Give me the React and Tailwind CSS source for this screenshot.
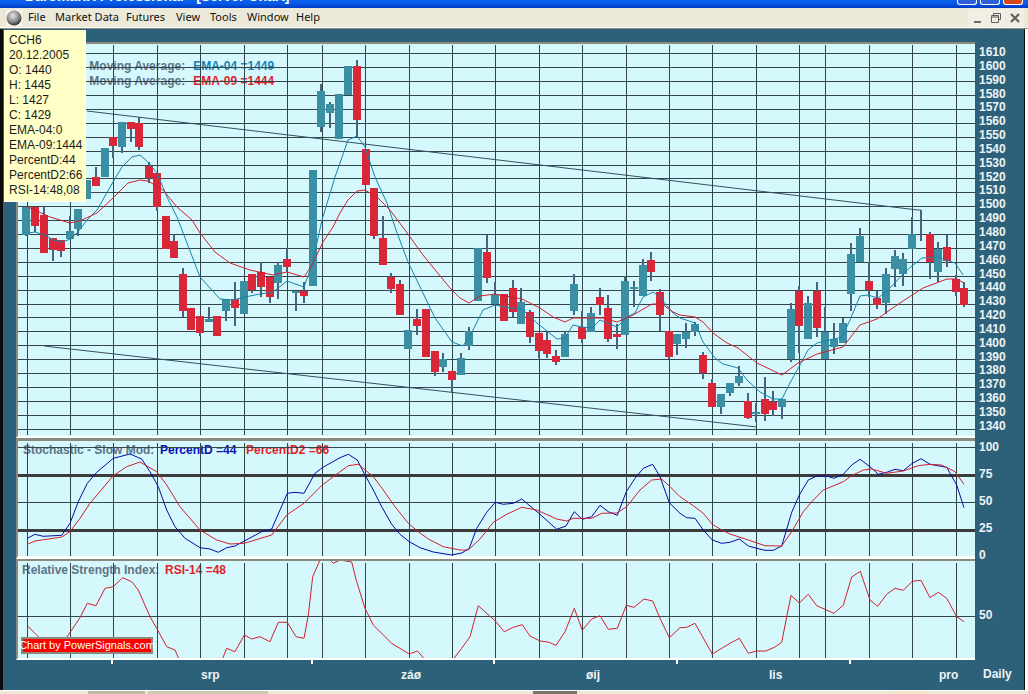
const MENU = [
  ['File', 'w-[27px]'],
  ['Market Data', 'w-[71px]'],
  ['Futures', 'w-[50px]'],
  ['View', 'w-[34px]'],
  ['Tools', 'w-[37px]'],
  ['Window', 'w-[49px]'],
  ['Help', 'w-[30px]'],
];

const TOOLTIP = [
  'CCH6', '20.12.2005', 'O: 1440', 'H: 1445', 'L: 1427', 'C: 1429', 'EMA-04:0',
  'EMA-09:1444', 'PercentD:44', 'PercentD2:66', 'RSI-14:48,08',
];

const PRICES = [];
for (let p = 1610; p >= 1340; p -= 10) PRICES.push(p);

const GRID_X = [
  27, 70, 113, 157, 200, 244, 287, 322, 365, 409, 452, 495, 539, 582, 626, 669,
  712, 756, 799, 825, 869, 912, 956,
];

const PRICE_Y = PRICES.map((_, i) => Math.round(53.3 + 13.9 * i));

// x, wick top, wick bottom, body top, body bottom, up?
const CANDLES = [
  [26, 207, 236, 207, 235, 1], [35, 207, 232, 207, 226, 0], [44, 207, 253, 215, 253, 0],
  [52.5, 238, 261, 238, 250, 0], [61, 240, 257, 240, 251, 0], [70, 216, 239, 231, 239, 1],
  [78, 209, 236, 209, 229, 1], [87, 180, 199, 180, 199, 1], [96, 167, 186, 177, 186, 0],
  [105, 148, 177, 148, 177, 1], [113, 137, 158, 137, 146, 0], [122, 122, 153, 122, 147, 1],
  [131, 122, 142, 122, 129, 0], [139, 117, 150, 123, 147, 0], [148.5, 162, 183, 166, 178, 0],
  [157, 173, 211, 173, 207, 0], [166, 216, 249, 216, 249, 0], [174, 234, 258, 241, 258, 0],
  [183, 268, 317, 274, 311, 0], [191, 308, 330, 308, 330, 0], [200, 316, 336, 316, 333, 0],
  [209, 307, 322, 319, 322, 1], [217, 316, 336, 316, 336, 0], [226, 299, 321, 299, 311, 1],
  [235, 282, 326, 299, 308, 0], [244, 281, 314, 281, 314, 1], [252, 274, 293, 274, 290, 0],
  [261, 262, 297, 272, 287, 0], [270, 277, 303, 277, 297, 0], [278, 262, 299, 265, 283, 1],
  [287, 248, 272, 259, 267, 0], [296, 291, 311, 291, 293, 1], [304, 282, 303, 291, 296, 0],
  [313, 170, 286, 170, 286, 1], [321, 84, 132, 91, 127, 1], [330, 102, 128, 104, 113, 1],
  [339, 94, 139, 94, 139, 1], [348, 66, 95, 66, 95, 1], [357, 60, 137, 66, 120, 0],
  [366, 149, 185, 149, 185, 0], [374, 188, 239, 188, 236, 0], [383, 216, 265, 238, 265, 0],
  [391, 273, 293, 277, 289, 0], [400, 280, 315, 284, 315, 0], [408, 330, 349, 330, 349, 1],
  [417, 309, 335, 319, 326, 0], [426, 309, 357, 309, 357, 0], [435, 351, 376, 351, 372, 0],
  [443, 353, 372, 359, 367, 1], [452, 371, 392, 371, 380, 0], [461, 353, 375, 358, 375, 1],
  [469, 327, 350, 331, 346, 1], [478, 248, 301, 248, 301, 1], [487, 235, 283, 252, 278, 0],
  [495, 282, 304, 295, 304, 1], [504, 294, 321, 294, 321, 0], [513, 280, 317, 288, 312, 0],
  [521, 288, 324, 302, 324, 1], [530, 310, 343, 312, 337, 0], [539, 333, 358, 333, 351, 0],
  [547, 332, 358, 340, 354, 0], [556, 350, 365, 356, 362, 0], [565, 332, 357, 334, 357, 1],
  [574, 274, 315, 284, 311, 1], [582, 311, 343, 327, 339, 0], [591, 307, 332, 313, 332, 1],
  [600, 288, 315, 297, 305, 0], [608, 295, 342, 308, 339, 0], [617, 324, 349, 334, 337, 0],
  [625, 276, 335, 281, 335, 1], [634, 281, 307, 287, 289, 1], [643, 259, 296, 265, 296, 1],
  [651, 252, 281, 260, 272, 0], [660, 289, 331, 292, 315, 0], [669, 331, 359, 331, 357, 0],
  [677, 334, 355, 334, 344, 1], [686, 323, 348, 332, 339, 1], [695, 322, 336, 324, 332, 1],
  [703, 352, 379, 355, 373, 0], [712, 379, 407, 383, 407, 0], [721, 394, 414, 394, 407, 1],
  [730, 383, 396, 383, 393, 1], [739, 366, 386, 376, 383, 1], [748, 393, 419, 401, 418, 0],
  [756, 403, 422, 412, 414, 1], [765, 377, 421, 399, 414, 0], [773, 391, 416, 402, 410, 0],
  [782, 399, 419, 399, 407, 1], [791, 303, 362, 309, 359, 1], [799, 286, 353, 291, 326, 0],
  [808, 296, 339, 303, 339, 1], [817, 282, 337, 291, 328, 0], [825, 307, 359, 332, 359, 1],
  [834, 323, 354, 339, 347, 1], [843, 318, 343, 323, 343, 1], [851, 243, 311, 254, 294, 1],
  [860, 228, 262, 236, 262, 1], [869, 262, 297, 281, 290, 0], [877, 291, 309, 298, 305, 0],
  [886, 268, 314, 274, 303, 1], [895, 250, 287, 256, 269, 1], [903, 253, 286, 259, 274, 1],
  [912, 217, 249, 234, 249, 1], [921, 210, 241, 210, 210, 1], [930, 232, 279, 234, 262, 0],
  [938, 242, 282, 249, 272, 1], [947, 235, 267, 247, 261, 0], [956, 275, 296, 279, 292, 0],
  [964, 282, 307, 288, 305, 0],
];

const EMA4 =
  '28,233 35,232 45,235 53,240 63,242 70,239 78,232 87,220 97,210 113,182 122,167 132,157 140,155 148,162 157,173 167,197 177,217 182,230 200,277 220,299 233,300 245,297 260,294 273,292 287,281 304,287 312,265 322,220 335,177 340,163 348,140 357,136 365,147 375,177 387,203 396,230 408,262 435,318 452,342 463,346 473,330 483,310 495,305 510,308 522,309 537,323 557,339 565,338 573,325 582,327 592,328 600,320 617,327 627,317 635,313 643,297 653,292 660,297 673,313 680,318 695,323 703,342 715,358 723,364 738,368 747,380 760,392 773,399 782,399 790,383 800,365 808,350 817,343 842,337 850,320 860,296 868,295 878,298 887,291 907,270 922,258 938,257 955,263 963,275';

const EMA9 =
  '28,207 50,217 70,223 82,220 97,213 113,198 128,183 140,180 148,181 163,190 177,207 192,220 200,233 215,252 230,263 250,270 273,275 287,272 304,277 312,265 323,242 333,227 340,213 348,200 357,191 365,190 378,198 390,210 405,230 423,255 450,288 460,298 469,303 480,296 495,294 522,299 540,308 553,317 565,322 573,318 603,318 617,322 633,315 652,304 662,304 673,312 680,315 695,317 703,322 713,333 727,343 738,348 757,363 782,375 798,363 817,354 843,347 860,325 877,319 900,303 923,288 947,279 957,279 964,283';

// traced off a 3x crop: x = x0 + px / 3, y = y0 + py / 3
function trace(x0, y0, px) {
  const out = [];
  for (let i = 0; i < px.length; i += 2) {
    out.push(`${(x0 + px[i] / 3).toFixed(1)},${(y0 + px[i + 1] / 3).toFixed(1)}`);
  }
  return out.join(' ');
}

const PCT_D = [
  trace(0, 435, [82, 310, 105, 298, 130, 304, 185, 301, 210, 265, 235, 200, 262, 145, 290, 112, 340, 70, 390, 57, 425, 72, 450, 110, 475, 155, 500, 225, 525, 275, 555, 310, 600, 338, 630, 342, 655, 352, 680, 338, 705, 333, 733, 318, 785, 290, 815, 282, 840, 225, 862, 175, 885, 172, 912, 175, 945, 115, 967, 98, 1020, 68]),
  trace(340, 435, [25, 58, 52, 75, 75, 120, 100, 165, 125, 215, 155, 268, 180, 298, 208, 320, 240, 338, 280, 351, 335, 360, 365, 354, 388, 340, 410, 280, 440, 232, 466, 202, 490, 208, 520, 205, 545, 192, 600, 238, 650, 283, 678, 273, 703, 230, 727, 253, 755, 245, 780, 211, 805, 230, 832, 241, 859, 170, 885, 130, 910, 100, 938, 88, 960, 125, 988, 203, 1020, 235]),
  trace(680, 435, [20, 248, 45, 250, 70, 285, 97, 315, 125, 325, 150, 322, 178, 312, 205, 333, 230, 340, 255, 346, 280, 346, 305, 333, 335, 232, 358, 180, 385, 135, 410, 123, 440, 123, 462, 130, 490, 118, 515, 90, 540, 73, 570, 95, 595, 118, 620, 112, 645, 103, 670, 107, 697, 85, 723, 71, 750, 88, 800, 97, 830, 150, 852, 218]),
].join(' ');

const PCT_D2 = [
  trace(0, 435, [82, 328, 105, 318, 185, 306, 210, 290, 240, 250, 270, 205, 340, 122, 380, 95, 420, 81, 470, 110, 500, 150, 540, 215, 600, 285, 650, 315, 690, 327, 733, 325, 815, 300, 860, 240, 912, 205, 967, 150, 1020, 110]),
  trace(340, 435, [25, 92, 55, 88, 100, 125, 130, 165, 165, 215, 205, 265, 235, 290, 265, 312, 310, 335, 360, 345, 385, 345, 420, 312, 460, 262, 500, 238, 545, 217, 590, 225, 650, 252, 680, 258, 700, 250, 755, 250, 785, 235, 830, 234, 860, 215, 900, 165, 935, 135, 965, 132, 990, 155, 1020, 185]),
  trace(680, 435, [40, 212, 70, 235, 97, 268, 125, 285, 150, 297, 205, 315, 255, 332, 305, 333, 335, 290, 370, 230, 400, 195, 430, 165, 490, 140, 515, 122, 550, 105, 575, 102, 620, 115, 670, 108, 715, 92, 750, 88, 785, 90, 825, 110, 852, 148]),
].join(' ');

const RSI = [
  trace(0, 435, [82, 572, 110, 600, 150, 640, 190, 620, 205, 600, 240, 548, 262, 505, 288, 512, 315, 460, 340, 455, 368, 428, 395, 440, 415, 465, 450, 545, 470, 580, 500, 635, 525, 645, 545, 690, 660, 690, 680, 640, 705, 650, 733, 600, 755, 612, 780, 605, 810, 620, 835, 562, 862, 562, 888, 605, 912, 610, 925, 540, 938, 425, 960, 375, 990, 375, 1000, 385, 1020, 375]),
  trace(340, 435, [35, 381, 50, 440, 75, 520, 100, 570, 155, 625, 208, 657, 232, 648, 265, 685, 330, 685, 365, 640, 390, 605, 415, 512, 466, 558, 493, 590, 520, 577, 547, 569, 570, 603, 600, 618, 625, 621, 648, 631, 675, 590, 703, 520, 727, 586, 755, 552, 780, 542, 805, 583, 832, 580, 859, 511, 882, 517, 912, 492, 938, 498, 960, 550, 988, 608, 1020, 578]),
  trace(680, 435, [20, 577, 45, 565, 97, 657, 150, 625, 178, 610, 205, 655, 230, 648, 258, 648, 285, 636, 305, 622, 333, 481, 358, 504, 385, 478, 410, 512, 462, 535, 490, 510, 515, 426, 541, 409, 570, 495, 593, 514, 620, 478, 645, 460, 670, 466, 697, 439, 723, 436, 750, 488, 775, 472, 800, 490, 830, 545, 852, 560]),
].join(' ');

const GRID = '#34444b';

function VLines({ top, bottom }) {
  return GRID_X.map((x) => (
    <line key={x} x1={x + 0.5} x2={x + 0.5} y1={top} y2={bottom} stroke={GRID} shapeRendering="crispEdges" />
  ));
}

function HLine({ y, w = 1, color = GRID }) {
  return <line x1="18" x2="975" y1={y} y2={y} stroke={color} strokeWidth={w} shapeRendering="crispEdges" />;
}

function Candle({ c }) {
  const [x, wt, wb, bt, bb, up] = c;
  const left = Math.round(x) - 4;
  return (
    <g shapeRendering="crispEdges">
      <rect x={left + 3} y={wt} width="2" height={wb - wt} fill="#46627c" />
      {bb > bt && <rect x={left} y={bt} width="8" height={bb - bt} fill={up ? '#3c8ea2' : '#d92739'} />}
    </g>
  );
}

function PriceChart() {
  return (
    <div className="relative h-[392px] bg-[#d5f8fd] pt-[15px] text-[12px] font-bold leading-[15px] font-['Liberation_Sans',sans-serif]">
      <div className="flex gap-2 text-[#5d7485]">
        <span>Exponential Moving Average:</span>
        <span className="text-[#1483b5]">EMA-04 =1449</span>
      </div>
      <div className="flex gap-2 text-[#5d7485]">
        <span>Exponential Moving Average:</span>
        <span className="text-[#df1f2b]">EMA-09 =1444</span>
      </div>
      <svg className="absolute inset-0 h-full w-full" viewBox="18 44 957 392">
        {PRICE_Y.map((y) => <HLine key={y} y={y + 0.5} />)}
        <VLines top={45} bottom={435} />
        <polyline points="87,111 918,210 921,210" fill="none" stroke="#34505f" />
        <polyline points="44,346 757,427" fill="none" stroke="#34505f" />
        {CANDLES.map((c) => <Candle key={c[0]} c={c} />)}
        <polyline points={EMA4} fill="none" stroke="#1585ad" />
        <polyline points={EMA9} fill="none" stroke="#d11f2d" />
      </svg>
    </div>
  );
}

function StochChart() {
  return (
    <div className="relative h-[115px] bg-[#d5f8fd] pl-[5px] pt-[2px] text-[12px] font-bold leading-[15px] font-['Liberation_Sans',sans-serif]">
      <div className="flex text-[#5d7485]">
        <span className="w-[137px]">Stochastic - Slow Mod:</span>
        <span className="w-[86px] text-[#0a10b8]">PercentD =44</span>
        <span className="text-[#df1f2b]">PercentD2 =66</span>
      </div>
      <svg className="absolute inset-0 h-full w-full" viewBox="18 441 957 115">
        <HLine y={447.5} />
        <HLine y={502.5} />
        <VLines top={443} bottom={556} />
        <HLine y={475.5} w={3} color="#3c3c3c" />
        <HLine y={530.5} w={3} color="#3c3c3c" />
        <polyline points={PCT_D} fill="none" stroke="#0808a8" />
        <polyline points={PCT_D2} fill="none" stroke="#d11f2d" />
      </svg>
    </div>
  );
}

function RsiChart() {
  return (
    <div className="relative h-[97px] overflow-hidden bg-[#d5f8fd] pl-[4px] pt-[2px] text-[12px] font-bold leading-[15px] font-['Liberation_Sans',sans-serif]">
      <div className="flex text-[#5d7485]">
        <span className="w-[143px]">Relative Strength Index:</span>
        <span className="text-[#df1f2b]">RSI-14 =48</span>
      </div>
      <svg className="absolute inset-0 h-full w-full" viewBox="18 561 957 97">
        <HLine y={616.5} />
        <VLines top={563} bottom={658} />
        <polyline points={RSI} fill="none" stroke="#d11f2d" />
      </svg>
      <div className="absolute bottom-[4px] left-[3px] flex h-[17px] w-[132px] items-center justify-center whitespace-nowrap border-2 border-[#8a8a80] bg-[#ff0000] text-[11px] font-normal text-white">
        Chart by PowerSignals.com
      </div>
    </div>
  );
}

export default function App() {
  return (
    <div className="flex h-[694px] w-[1028px] flex-col overflow-hidden bg-white font-['Liberation_Sans',sans-serif]">
      {/* title bar, only the bottom of it is in the shot */}
      <div className="flex h-2 justify-between overflow-hidden bg-gradient-to-b from-[#0a62ee] via-[#0758e4] to-[#0038c0] pl-[25px] pr-[5px]">
        <span className="-mt-[11px] whitespace-nowrap text-[14px] font-bold leading-[14px] text-white">
          DaromarIX Professional - [Server Chart]
        </span>
        <div className="flex gap-[3px]">
          <div className="h-[5px] w-[20px] rounded-b-[3px] border border-t-0 border-white bg-[#2f5fd8]" />
          <div className="h-[5px] w-[20px] rounded-b-[3px] border border-t-0 border-white bg-[#2f5fd8]" />
          <div className="h-[5px] w-[20px] rounded-b-[3px] border border-t-0 border-white bg-[#d8481c]" />
        </div>
      </div>

      {/* menu bar */}
      <div className="flex h-[20px] items-center justify-between border-b border-white bg-[#ece9d8] pl-[6px] pr-[4px] text-[11px] text-[#111] font-['Noto_Sans',sans-serif]">
        <div className="flex items-center">
          <div className="mr-[6px] flex h-[16px] w-[16px] items-center justify-center bg-[#f6f5ee]">
            <svg width="16" height="16" viewBox="0 0 16 16">
              <defs>
                <radialGradient id="globe" cx="0.42" cy="0.35" r="0.7">
                  <stop offset="0" stopColor="#e6e6e6" />
                  <stop offset="0.55" stopColor="#8f8f8f" />
                  <stop offset="1" stopColor="#202020" />
                </radialGradient>
              </defs>
              <circle cx="8" cy="8" r="7.5" fill="url(#globe)" />
            </svg>
          </div>
          {MENU.map(([m, w]) => (
            <span key={m} className={`${w} whitespace-nowrap`}>{m}</span>
          ))}
        </div>
        <div className="flex items-center gap-[1px]">
          <div className="flex h-[18px] w-[18px] items-end justify-center bg-[#f1efe3] pb-[4px]">
            <div className="h-[2px] w-[7px] bg-[#6a6a6a]" />
          </div>
          <div className="flex h-[18px] w-[18px] items-center justify-center bg-[#f1efe3]">
            <svg width="12" height="12" viewBox="0 0 12 12" fill="none" stroke="#5f5f5f">
              <path d="M3.5 3V1.5h7v6H8.5" />
              <path d="M1.5 3.5h7v1.5h-7zM1.5 5v5.5h7V5" />
            </svg>
          </div>
          <div className="flex h-[18px] w-[18px] items-center justify-center bg-[#f1efe3]">
            <svg width="10" height="10" viewBox="0 0 10 10" stroke="#5f5f5f" strokeWidth="2.2">
              <path d="M1 1l8 8M9 1l-8 8" />
            </svg>
          </div>
        </div>
      </div>

      {/* main frame */}
      <div className="relative flex h-[662px] border-t border-[#8a8a80]">
        <div className="w-[3px] bg-[#0c0c0c]" />
        <div className="flex w-[1021px] flex-col bg-[#2d6179]">
          <div className="h-[13px]" />
          <div className="flex">
            <div className="ml-[13px] w-[959px]">
              <div className="border-l-2 border-t-2 border-b-2 border-l-[#8a8a80] border-t-[#8a8a80] border-b-white">
                <PriceChart />
              </div>
              <div className="border-l-2 border-t-[3px] border-b-[3px] border-l-[#8a8a80] border-t-[#8a8a80] border-b-white">
                <StochChart />
              </div>
              <div className="border-l-2 border-t-2 border-b-2 border-l-[#8a8a80] border-t-[#8a8a80] border-b-white">
                <RsiChart />
              </div>
            </div>

            {/* value axis */}
            <div className="flex-1 pl-[4px] text-[12px] font-bold text-[#eef4f6]">
              <div className="h-[396px] pt-[3px]">
                {PRICES.map((p) => (
                  <div key={p} className="h-[13.85px] leading-[14px]">{p}</div>
                ))}
              </div>
              <div className="h-[121px] pt-[2px]">
                {[100, 75, 50, 25, 0].map((v) => (
                  <div key={v} className="h-[27px] leading-[14px]">{v}</div>
                ))}
              </div>
              <div className="pt-[49px] leading-[14px]">50</div>
            </div>
          </div>

          {/* time axis */}
          <div className="relative h-[30px] text-[12px] font-bold text-[#eef4f6]">
            <div className="absolute left-[108px] top-0 h-[4px] w-[2px] bg-white" />
            <div className="absolute left-[308px] top-0 h-[4px] w-[2px] bg-white" />
            <div className="absolute left-[490px] top-0 h-[4px] w-[2px] bg-white" />
            <div className="absolute left-[673px] top-0 h-[4px] w-[2px] bg-white" />
            <div className="absolute left-[846px] top-0 h-[4px] w-[2px] bg-white" />
            <span className="absolute left-[198px] top-[6px]">srp</span>
            <span className="absolute left-[398px] top-[6px]">záø</span>
            <span className="absolute left-[583px] top-[6px]">øíj</span>
            <span className="absolute left-[766px] top-[6px]">lis</span>
            <span className="absolute left-[936px] top-[6px]">pro</span>
            <span className="absolute left-[980px] top-[5px]">Daily</span>
          </div>
        </div>
        <div className="w-[1px] bg-[#0c0c0c]" />

        {/* data window over the chart */}
        <div className="absolute left-[4px] top-[1px] h-[172px] w-[82px] border-r border-b border-white bg-[#ffffc6] pl-[5px] pt-[3px] text-[12px] leading-[15px] text-[#1c1c1c]">
          {TOOLTIP.map((t) => (
            <div key={t} className="whitespace-nowrap">{t}</div>
          ))}
        </div>
      </div>

      {/* task bar sliver */}
      <div className="flex h-[4px] border-t border-white bg-[#ece9d8]">
        <div className="ml-[88px] w-[57px] bg-[#bfb8a0]" />
        <div className="ml-[3px] w-[120px] bg-[#cfc8b0]" />
        <div className="ml-[265px] w-[44px] bg-[#77756a]" />
        <div className="ml-[310px] w-[47px] bg-[#f2e4c8]" />
      </div>
    </div>
  );
}
